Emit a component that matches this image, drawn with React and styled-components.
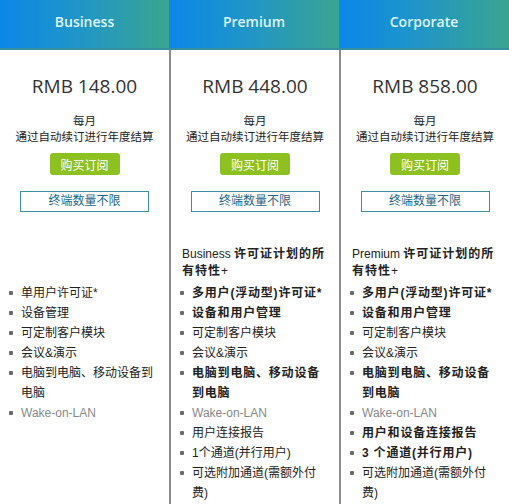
import styled, { createGlobalStyle } from "styled-components";

const GlobalStyle = createGlobalStyle`
  html, body {
    margin: 0;
    padding: 0;
    background: #fff;
  }
  body {
    font-family: "Liberation Sans", "Noto Sans CJK SC", sans-serif;
  }
`;

const Plans = styled.div`
  width: 509px;
  height: 504px;
  display: grid;
  grid-template-columns: 169px 170px 170px;
  overflow: hidden;
`;

const Column = styled.div`
  display: flex;
  flex-direction: column;
  align-items: center;
  border-left: ${(p) => (p.$first ? "none" : "2px solid #8d8d8d")};
  min-height: 504px;
`;

const Header = styled.div`
  align-self: stretch;
  margin-left: ${(p) => (p.$first ? "0" : "-2px")};
  height: 50px;
  padding-bottom: 5px;
  box-sizing: border-box;
  display: flex;
  align-items: center;
  justify-content: center;
  background: linear-gradient(90deg, #0b87e8 0%, #1f95c9 45%, #3aa590 100%);
  border-bottom: 2px solid #3a8f9c;
  color: #dff5ff;
  font-family: "Open Sans", "Liberation Sans", sans-serif;
  font-weight: 600;
  font-size: 14px;
`;

const Price = styled.div`
  margin-top: 24px;
  font-family: "Open Sans", "Liberation Sans", sans-serif;
  font-size: 19px;
  line-height: 24px;
  color: #333;
`;

const Period = styled.div`
  margin-top: 15px;
  font-size: 11.5px;
  line-height: 16px;
  color: #222;
  text-align: center;
`;

const BuyButton = styled.button`
  margin-top: 8px;
  width: 70px;
  height: 22px;
  border: none;
  border-radius: 3px;
  background: #8dc021;
  color: #fff;
  font-family: "Liberation Sans", "Noto Sans CJK SC", sans-serif;
  font-size: 12px;
  padding: 0;
`;

const LimitBox = styled.div`
  margin-top: 16px;
  width: 127px;
  height: 19px;
  border: 1px solid #3d8fa2;
  color: #1c6688;
  font-size: 12px;
  line-height: 19px;
  text-align: center;
`;

const FeatureHeading = styled.div`
  align-self: stretch;
  margin: 34px 0 0 11px;
  padding-right: 7px;
  font-size: 12px;
  line-height: 17px;
  color: #222;
  visibility: ${(p) => (p.$hidden ? "hidden" : "visible")};
  b {
    font-weight: 700;
    letter-spacing: 1px;
  }
`;

const FeatureList = styled.ul`
  align-self: stretch;
  list-style: none;
  margin: 3px 0 0 0;
  padding: 0 12px 0 8px;
`;

const Feature = styled.li`
  position: relative;
  padding-left: 13px;
  font-size: 12px;
  line-height: 20px;
  font-weight: ${(p) => (p.$bold ? 700 : 400)};
  letter-spacing: ${(p) => (p.$bold ? "0.8px" : "0")};
  color: ${(p) => (p.$muted ? "#888" : "#222")};
  &::before {
    content: "";
    position: absolute;
    left: 1px;
    top: 8px;
    width: 4px;
    height: 4px;
    border-radius: 1px;
    background: #6a6a6a;
  }
`;

const plans = [
  {
    name: "Business",
    price: "RMB 148.00",
    heading: null,
    features: [
      { t: "单用户许可证*" },
      { t: "设备管理" },
      { t: "可定制客户模块" },
      { t: "会议&演示" },
      { t: "电脑到电脑、移动设备到电脑" },
      { t: "Wake-on-LAN", muted: true },
    ],
  },
  {
    name: "Premium",
    price: "RMB 448.00",
    heading: "Business",
    features: [
      { t: "多用户(浮动型)许可证*", bold: true },
      { t: "设备和用户管理", bold: true },
      { t: "可定制客户模块" },
      { t: "会议&演示" },
      { t: "电脑到电脑、移动设备到电脑", bold: true },
      { t: "Wake-on-LAN", muted: true },
      { t: "用户连接报告" },
      { t: "1个通道(并行用户)" },
      { t: "可选附加通道(需额外付费)" },
    ],
  },
  {
    name: "Corporate",
    price: "RMB 858.00",
    heading: "Premium",
    features: [
      { t: "多用户(浮动型)许可证*", bold: true },
      { t: "设备和用户管理", bold: true },
      { t: "可定制客户模块" },
      { t: "会议&演示" },
      { t: "电脑到电脑、移动设备到电脑", bold: true },
      { t: "Wake-on-LAN", muted: true },
      { t: "用户和设备连接报告", bold: true },
      { t: "3 个通道(并行用户)", bold: true },
      { t: "可选附加通道(需额外付费)" },
    ],
  },
];

export default function App() {
  return (
    <>
      <GlobalStyle />
      <Plans>
        {plans.map((p, i) => (
          <Column key={p.name} $first={i === 0}>
            <Header $first={i === 0}>{p.name}</Header>
            <Price>{p.price}</Price>
            <Period>
              每月
              <br />
              通过自动续订进行年度结算
            </Period>
            <BuyButton>购买订阅</BuyButton>
            <LimitBox>终端数量不限</LimitBox>
            <FeatureHeading $hidden={!p.heading}>
              {p.heading || "Business"} <b>许可证计划的所有特性</b>+
            </FeatureHeading>
            <FeatureList>
              {p.features.map((f) => (
                <Feature key={f.t} $bold={f.bold} $muted={f.muted}>
                  {f.t}
                </Feature>
              ))}
            </FeatureList>
          </Column>
        ))}
      </Plans>
    </>
  );
}
